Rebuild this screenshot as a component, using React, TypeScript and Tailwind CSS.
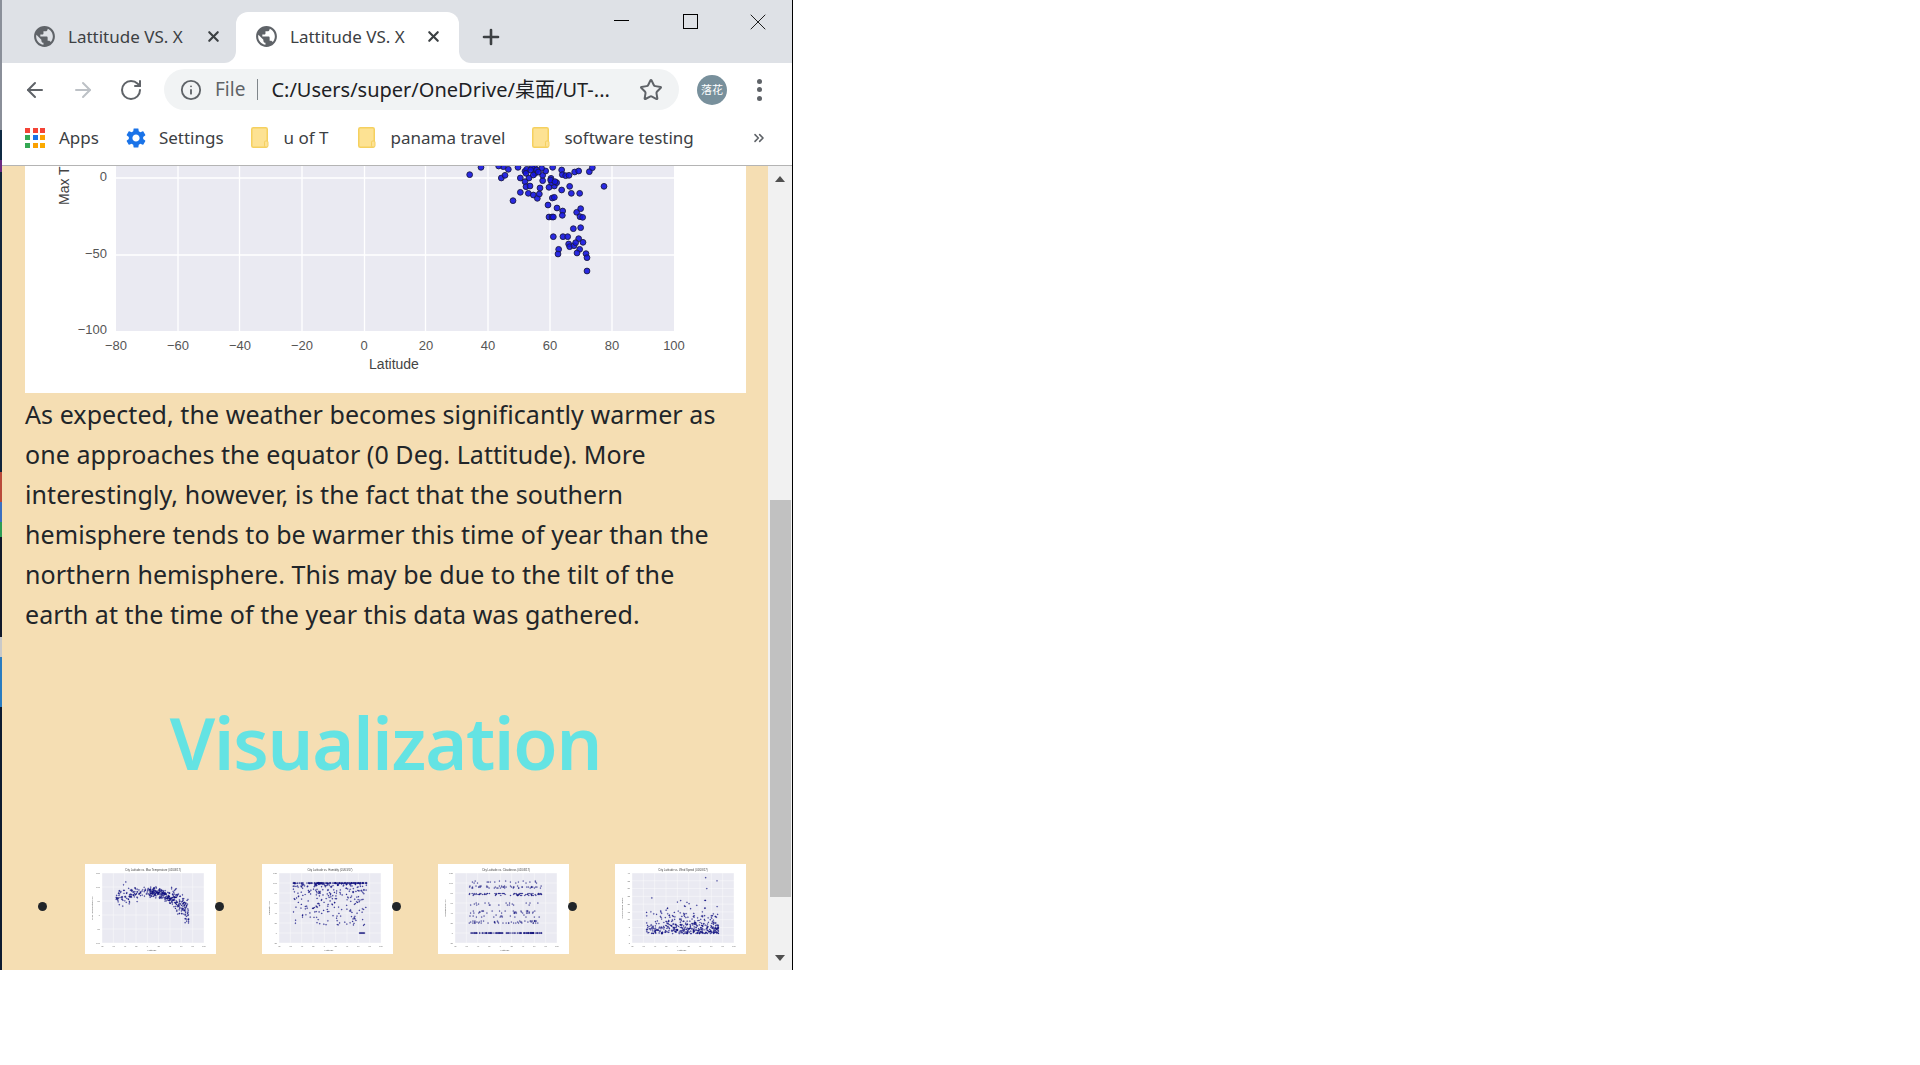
import React from 'react';
import { ArrowLeft, ArrowRight, RotateCw, Info, Star, X, Plus, ChevronsRight } from 'lucide-react';

const GLOBE =
  'M12 2C6.48 2 2 6.48 2 12s4.48 10 10 10 10-4.48 10-10S17.52 2 12 2zm-1 17.93c-3.95-.49-7-3.85-7-7.93 0-.62.08-1.21.21-1.79L9 15v1c0 1.1.9 2 2 2v1.93zm6.9-2.54c-.26-.81-1-1.39-1.9-1.39h-1v-3c0-.55-.45-1-1-1H8v-2h2c.55 0 1-.45 1-1V7h2c1.1 0 2-.9 2-2v-.41c2.93 1.19 5 4.06 5 7.41 0 2.08-.8 3.97-2.1 5.39z';
const GEAR =
  'M19.14 12.94c.04-.3.06-.61.06-.94 0-.32-.02-.64-.07-.94l2.03-1.58c.18-.14.23-.41.12-.61l-1.92-3.32c-.12-.22-.37-.29-.59-.22l-2.39.96c-.5-.38-1.03-.7-1.62-.94l-.36-2.54c-.04-.24-.24-.41-.48-.41h-3.84c-.24 0-.43.17-.47.41l-.36 2.54c-.59.24-1.13.57-1.62.94l-2.39-.96c-.22-.08-.47 0-.59.22L2.74 8.87c-.12.21-.08.47.12.61l2.03 1.58c-.05.3-.09.63-.09.94s.02.64.07.94l-2.03 1.58c-.18.14-.23.41-.12.61l1.92 3.32c.12.22.37.29.59.22l2.39-.96c.5.38 1.03.7 1.62.94l.36 2.54c.05.24.24.41.48.41h3.84c.24 0 .44-.17.47-.41l.36-2.54c.59-.24 1.13-.56 1.62-.94l2.39.96c.22.08.47 0 .59-.22l1.92-3.32c.12-.22.07-.47-.12-.61l-2.01-1.58zM12 15.6c-1.98 0-3.6-1.62-3.6-3.6s1.62-3.6 3.6-3.6 3.6 1.62 3.6 3.6-1.62 3.6-3.6 3.6z';

// dots read off the visible part of the big chart, in zoomed crop units
const DOTS: [number, number][] = [
  [209, 44], [243, 22], [304, 54], [315, 46], [325, 28], [354, 22], [361, 54], [375, 34], [387, 54], [375, 65],
  [378, 80], [390, 78], [361, 97], [385, 100], [400, 105], [412, 115], [418, 102], [420, 84], [428, 62], [428, 46],
  [405, 40], [400, 45], [437, 33], [458, 22], [485, 30], [487, 44], [497, 47], [507, 46], [524, 36], [536, 33],
  [568, 35], [577, 23], [612, 79], [509, 79], [514, 100], [539, 100], [485, 90], [447, 82], [463, 78], [470, 68],
  [453, 55], [455, 68], [339, 122], [457, 114], [463, 112], [444, 135], [471, 144], [488, 153], [487, 166], [530, 157],
  [542, 146], [540, 170], [548, 172], [447, 171], [456, 171], [460, 171], [520, 206], [542, 203], [460, 230], [489, 230],
  [503, 230], [536, 236], [549, 247], [506, 252], [509, 260], [522, 257], [527, 248], [476, 268], [474, 282], [539, 268],
  [531, 279], [558, 281], [561, 293], [561, 333], [310, 20], [296, 18], [405, 25], [425, 25], [395, 22], [410, 30],
  [380, 28], [452, 60], [465, 65], [378, 40], [392, 30], [415, 36],
];

function rng(seed: number) {
  let s = seed;
  return () => {
    s = (s * 1664525 + 1013904223) % 4294967296;
    return s / 4294967296;
  };
}

type Pt = [number, number];

function tempPoints(): Pt[] {
  const r = rng(11);
  const pts: Pt[] = [];
  for (let i = 0; i < 420; i++) {
    const lat = r() < 0.72 ? 5 + r() * 68 : -55 + r() * 60;
    const base = lat < -5 ? 82 - 0.012 * (lat + 5) * (lat + 5) : 82 - 0.0165 * (lat - 5) * (lat - 5);
    const spread = lat > 40 ? 50 : lat < -30 ? 34 : 22;
    pts.push([lat, base + (r() + r() - 1) * spread]);
  }
  pts.push([-38, 118], [-42, 108], [55, 75], [62, 72], [-50, 70], [-32, 40], [-18, 48]);
  return pts;
}

function humidityPoints(): Pt[] {
  const r = rng(23);
  const pts: Pt[] = [];
  for (let i = 0; i < 420; i++) {
    const lat = r() < 0.72 ? -15 + r() * 90 : -55 + r() * 50;
    const hum = r() < 0.2 ? 100 : Math.max(8, 100 - Math.pow(r(), 2.3) * 85);
    pts.push([lat, hum]);
  }
  for (let i = 0; i < 10; i++) pts.push([62 + i, 0]);
  return pts;
}

function cloudPoints(): Pt[] {
  const r = rng(37);
  const levels = [0, 0, 0, 0, 0, 0, 20, 20, 32, 40, 40, 56, 75, 75, 75, 75, 90, 90, 90, 100];
  const pts: Pt[] = [];
  for (let i = 0; i < 380; i++) {
    const l = levels[Math.floor(r() * levels.length)];
    pts.push([-55 + r() * 128, l + (l === 0 ? 0 : Math.floor(r() * 3) * 2)]);
  }
  return pts;
}

function windPoints(): Pt[] {
  const r = rng(51);
  const pts: Pt[] = [];
  for (let i = 0; i < 430; i++) {
    const lat = r() < 0.62 ? 5 + r() * 68 : -55 + r() * 60;
    pts.push([lat, 1 + -Math.log(1 - r() * 0.985) * 5.2]);
  }
  pts.push([50, 37], [70, 35], [52, 30], [-45, 24]);
  return pts;
}

const CHARTS = [
  {
    title: 'City Latitude vs. Max Temperature (01/03/17)',
    yLabel: 'Max Temperature (F)',
    yMin: -100,
    yMax: 150,
    yTicks: [-100, -50, 0, 50, 100, 150],
    pts: tempPoints(),
  },
  {
    title: 'City Latitude vs. Humidity (01/03/17)',
    yLabel: 'Humidity (%)',
    yMin: -20,
    yMax: 120,
    yTicks: [-20, 0, 20, 40, 60, 80, 100, 120],
    pts: humidityPoints(),
  },
  {
    title: 'City Latitude vs. Cloudiness (01/03/17)',
    yLabel: 'Cloudiness (%)',
    yMin: -20,
    yMax: 120,
    yTicks: [-20, 0, 20, 40, 60, 80, 100, 120],
    pts: cloudPoints(),
  },
  {
    title: 'City Latitude vs. Wind Speed (01/03/17)',
    yLabel: 'Wind Speed (mph)',
    yMin: -5,
    yMax: 40,
    yTicks: [-5, 0, 5, 10, 15, 20, 25, 30, 35, 40],
    pts: windPoints(),
  },
];

const LAT_TICKS = [-80, -60, -40, -20, 0, 20, 40, 60, 80, 100];

function Thumb({ chart }: { chart: (typeof CHARTS)[number] }) {
  const px = (lat: number) => 17 + ((lat + 80) / 180) * 102;
  const py = (v: number) => 79 - ((v - chart.yMin) / (chart.yMax - chart.yMin)) * 70;
  return (
    <svg viewBox="0 0 131 90" className="w-[131px] h-[90px] shrink-0 bg-white">
      <g className="blur-[0.4px]">
        <text x="68" y="7" textAnchor="middle" fontSize="2.8" fill="#444" fontFamily="Liberation Sans">
          {chart.title}
        </text>
        <rect x="17" y="9" width="102" height="70" fill="#eaeaf2" />
        {LAT_TICKS.map((t) => (
          <g key={t}>
            <line x1={px(t)} x2={px(t)} y1="9" y2="79" stroke="#fff" strokeWidth="0.4" />
            <text x={px(t)} y="83" textAnchor="middle" fontSize="2.2" fill="#666" fontFamily="Liberation Sans">
              {t}
            </text>
          </g>
        ))}
        {chart.yTicks.map((t) => (
          <g key={t}>
            <line x1="17" x2="119" y1={py(t)} y2={py(t)} stroke="#fff" strokeWidth="0.4" />
            <text x="15" y={py(t) + 0.8} textAnchor="end" fontSize="2.2" fill="#666" fontFamily="Liberation Sans">
              {t}
            </text>
          </g>
        ))}
        <text x="67" y="87" textAnchor="middle" fontSize="2.5" fill="#555" fontFamily="Liberation Sans">
          Latitude
        </text>
        <text
          transform={`translate(7.5 44) rotate(-90)`}
          textAnchor="middle"
          fontSize="2.5"
          fill="#555"
          fontFamily="Liberation Sans"
        >
          {chart.yLabel}
        </text>
        {chart.pts.map(([lat, v], i) => (
          <circle key={i} cx={px(lat)} cy={py(v)} r="0.62" fill="#1a1a9c" fillOpacity="0.85" stroke="#111155" strokeWidth="0.15" />
        ))}
      </g>
    </svg>
  );
}

function BigChart() {
  return (
    <svg viewBox="25 166 721 227" className="w-[721px] h-[227px] block bg-white">
      <rect x="116" y="150" width="558" height="181" fill="#eaeaf2" />
      {[178, 239.5, 302, 364.5, 425.5, 488, 550, 612].map((x) => (
        <line key={x} x1={x} x2={x} y1="150" y2="331" stroke="#fff" strokeWidth="1.3" />
      ))}
      {[178, 255].map((y) => (
        <line key={y} x1="116" x2="674" y1={y} y2={y} stroke="#fff" strokeWidth="1.3" />
      ))}
      <g fontFamily="Liberation Sans" fontSize="13" fill="#555">
        <text x="107" y="181" textAnchor="end">0</text>
        <text x="107" y="258" textAnchor="end">−50</text>
        <text x="107" y="334" textAnchor="end">−100</text>
        {LAT_TICKS.map((t, i) => (
          <text key={t} x={116 + i * 62} y="350" textAnchor="middle">
            {t < 0 ? `−${-t}` : t}
          </text>
        ))}
      </g>
      <text x="394" y="369" textAnchor="middle" fontFamily="Liberation Sans" fontSize="14" fill="#444">
        Latitude
      </text>
      <text transform="translate(69 205) rotate(-90)" fontFamily="Liberation Sans" fontSize="14" fill="#444">
        Max T
      </text>
      {DOTS.map(([zx, zy], i) => (
        <circle
          key={i}
          cx={400 + zx / 3}
          cy={160 + zy / 3}
          r="2.9"
          fill="#1414e0"
          fillOpacity="0.9"
          stroke="#1c1c44"
          strokeWidth="0.9"
        />
      ))}
    </svg>
  );
}

function Tab({ active }: { active?: boolean }) {
  return (
    <div
      className={
        active
          ? 'relative flex items-center h-[51px] w-[223px] pl-[18px] pr-[17px] pb-[2px] bg-white rounded-t-[12px]'
          : 'flex items-center h-[51px] w-[234px] pl-[30px] pr-[14px] pb-[2px]'
      }
    >
      <svg viewBox="0 0 24 24" className="w-[25px] h-[25px] shrink-0 fill-[#5f6368]">
        <path d={GLOBE} />
      </svg>
      <span className="ml-[11px] text-[17px] text-[#3c4043] whitespace-nowrap">Lattitude VS. X</span>
      <X className="ml-auto w-[17px] h-[17px] text-[#3c4043]" strokeWidth={3} />
      {active && (
        <>
          <div className="absolute left-[-12px] bottom-0 w-[12px] h-[12px] bg-white">
            <div className="w-full h-full bg-[#dee1e6] rounded-br-[12px]" />
          </div>
          <div className="absolute right-[-12px] bottom-0 w-[12px] h-[12px] bg-white">
            <div className="w-full h-full bg-[#dee1e6] rounded-bl-[12px]" />
          </div>
        </>
      )}
    </div>
  );
}

function Folder({ className }: { className: string }) {
  return (
    <svg viewBox="0 0 18 21" className={`w-[18px] h-[21px] shrink-0 ${className}`}>
      <rect x="0.75" y="0.75" width="15.5" height="19.5" rx="1.5" fill="#fde293" stroke="#f5d05f" strokeWidth="1.5" />
      <rect x="13.5" y="14" width="3.5" height="6" rx="1.2" fill="#fde293" stroke="#f5d05f" strokeWidth="1" />
    </svg>
  );
}

function AppsIcon() {
  const colors = ['#f44336', '#f44336', '#f44336', '#34a853', '#1a73e8', '#fba000', '#34a853', '#fba000', '#fbaa00'];
  return (
    <div className="grid grid-cols-3 gap-[2.5px] w-[20px] h-[20px] shrink-0">
      {colors.map((c, i) => (
        <div key={i} className="w-[5px] h-[5px]" style={{ backgroundColor: c }} />
      ))}
    </div>
  );
}

// bits of the desktop showing through on the left of the window
const SLIVER = [
  ['#8a8f99', 130], ['#0f2a44', 30], ['#6b2a80', 12], ['#10243c', 300], ['#b94a3a', 30], ['#3a6fc0', 20],
  ['#2e9c54', 15], ['#10182a', 100], ['#c9c9c9', 20], ['#2a7cc0', 50], ['#0d1a30', 263],
] as const;

export default function App() {
  return (
    <div className="w-[1920px] h-[1065px] bg-white overflow-hidden flex items-start font-['Noto_Sans',sans-serif]">
      <div className="w-[2px] h-[970px] flex flex-col shrink-0">
        {SLIVER.map(([c, h], i) => (
          <div key={i} style={{ backgroundColor: c, height: h }} />
        ))}
      </div>

      <div className="w-[791px] h-[970px] flex flex-col border-r border-black shrink-0">
        {/* Tab strip */}
        <div className="h-[63px] bg-[#dee1e6] flex items-end shrink-0">
          <Tab />
          <Tab active />
          <Plus className="ml-[20px] mb-[14px] w-[24px] h-[24px] text-[#3c4043]" strokeWidth={2.6} />
          <div className="ml-auto mr-[20px] self-start mt-[14px] flex items-center h-[15px]">
            <div className="w-[15px] h-px bg-black -mt-[3px]" />
            <div className="ml-[54px] w-[15px] h-[15px] border border-black" />
            <X className="ml-[46.5px] w-[28px] h-[28px] text-black" strokeWidth={0.75} />
          </div>
        </div>

        {/* Address bar */}
        <div className="h-[47px] bg-white flex items-center shrink-0 pt-[6px]">
          <ArrowLeft className="ml-[21px] w-[24px] h-[24px] text-[#5f6368]" strokeWidth={2} />
          <ArrowRight className="ml-[24px] w-[24px] h-[24px] text-[#bdc1c6]" strokeWidth={2} />
          <RotateCw className="ml-[24px] w-[24px] h-[24px] text-[#5f6368]" strokeWidth={2} />
          <div className="ml-[21px] w-[515px] h-[41px] rounded-full bg-[#f1f3f4] flex items-center">
            <Info className="ml-[16px] w-[22px] h-[22px] text-[#5f6368]" strokeWidth={2} />
            <span className="ml-[13px] text-[19px] text-[#5f6368]">File</span>
            <div className="ml-[12px] w-px h-[21px] bg-[#80868b]" />
            <span className="ml-[13px] text-[20px] text-[#202124] whitespace-nowrap font-['Noto_Sans','Noto_Sans_CJK_SC',sans-serif]">
              C:/Users/super/OneDrive/桌面/UT-...
            </span>
            <Star className="ml-auto mr-[16px] w-[24px] h-[24px] text-[#5f6368]" strokeWidth={2} />
          </div>
          <div className="ml-[18px] w-[30px] h-[30px] rounded-full bg-[#78909c] flex items-center justify-center text-white text-[11px] font-['Noto_Sans_CJK_SC',sans-serif]">
            落花
          </div>
          <div className="ml-[30px] flex flex-col gap-[3.5px]">
            <div className="w-[5px] h-[5px] rounded-full bg-[#5f6368]" />
            <div className="w-[5px] h-[5px] rounded-full bg-[#5f6368]" />
            <div className="w-[5px] h-[5px] rounded-full bg-[#5f6368]" />
          </div>
        </div>

        {/* Bookmarks */}
        <div className="h-[56px] bg-white flex items-center border-b border-[#b4b4b4] shrink-0 text-[17px] text-[#3c4043] whitespace-nowrap">
          <div className="ml-[23px]">
            <AppsIcon />
          </div>
          <span className="ml-[14px]">Apps</span>
          <svg viewBox="0 0 24 24" className="ml-[25px] w-[24px] h-[24px] shrink-0 fill-[#1a73e8]">
            <path d={GEAR} />
          </svg>
          <span className="ml-[11px]">Settings</span>
          <Folder className="ml-[27px]" />
          <span className="ml-[15px]">u of T</span>
          <Folder className="ml-[29px]" />
          <span className="ml-[15px]">panama travel</span>
          <Folder className="ml-[27px]" />
          <span className="ml-[14px]">software testing</span>
          <ChevronsRight className="ml-auto mr-[25px] w-[16px] h-[16px] text-[#5f6368]" strokeWidth={2.4} />
        </div>

        {/* Page */}
        <div className="flex-1 flex min-h-0">
          <div className="w-[766px] bg-[#f5deb3] pl-[23px] pr-[22px] overflow-hidden">
            <BigChart />
            <p className="mt-[1px] h-[241px] text-[25px] leading-[40px] text-[#212529] tracking-[0.07px] whitespace-nowrap">
              As expected, the weather becomes significantly warmer as
              <br />
              one approaches the equator (0 Deg. Lattitude). More
              <br />
              interestingly, however, is the fact that the southern
              <br />
              hemisphere tends to be warmer this time of year than the
              <br />
              northern hemisphere. This may be due to the tilt of the
              <br />
              earth at the time of the year this data was gathered.
            </p>
            <div className="h-[229px] flex items-center justify-center">
              <h1 className="text-[72px] leading-none font-semibold text-[#64e3e3] tracking-[-1.2px] -mt-[15px]">Visualization</h1>
            </div>
            <ul className="grid grid-cols-4 w-[707px] ml-[14px]">
              {CHARTS.map((c) => (
                <li key={c.title} className="flex items-center justify-between">
                  <div className="relative z-10 -ml-[1px] -mt-[6px] w-[9px] h-[9px] rounded-full bg-[#212529] shrink-0" />
                  <Thumb chart={c} />
                </li>
              ))}
            </ul>
          </div>

          {/* Scrollbar */}
          <div className="w-[24px] bg-[#f1f1f1] flex flex-col items-center pt-[10px] pb-[9px]">
            <div className="w-0 h-0 border-x-[5.5px] border-x-transparent border-b-[6px] border-b-[#505050]" />
            <div className="mt-[318px] w-[21px] h-[397px] bg-[#c1c1c1]" />
            <div className="mt-auto w-0 h-0 border-x-[5.5px] border-x-transparent border-t-[6px] border-t-[#505050]" />
          </div>
        </div>
      </div>
    </div>
  );
}
